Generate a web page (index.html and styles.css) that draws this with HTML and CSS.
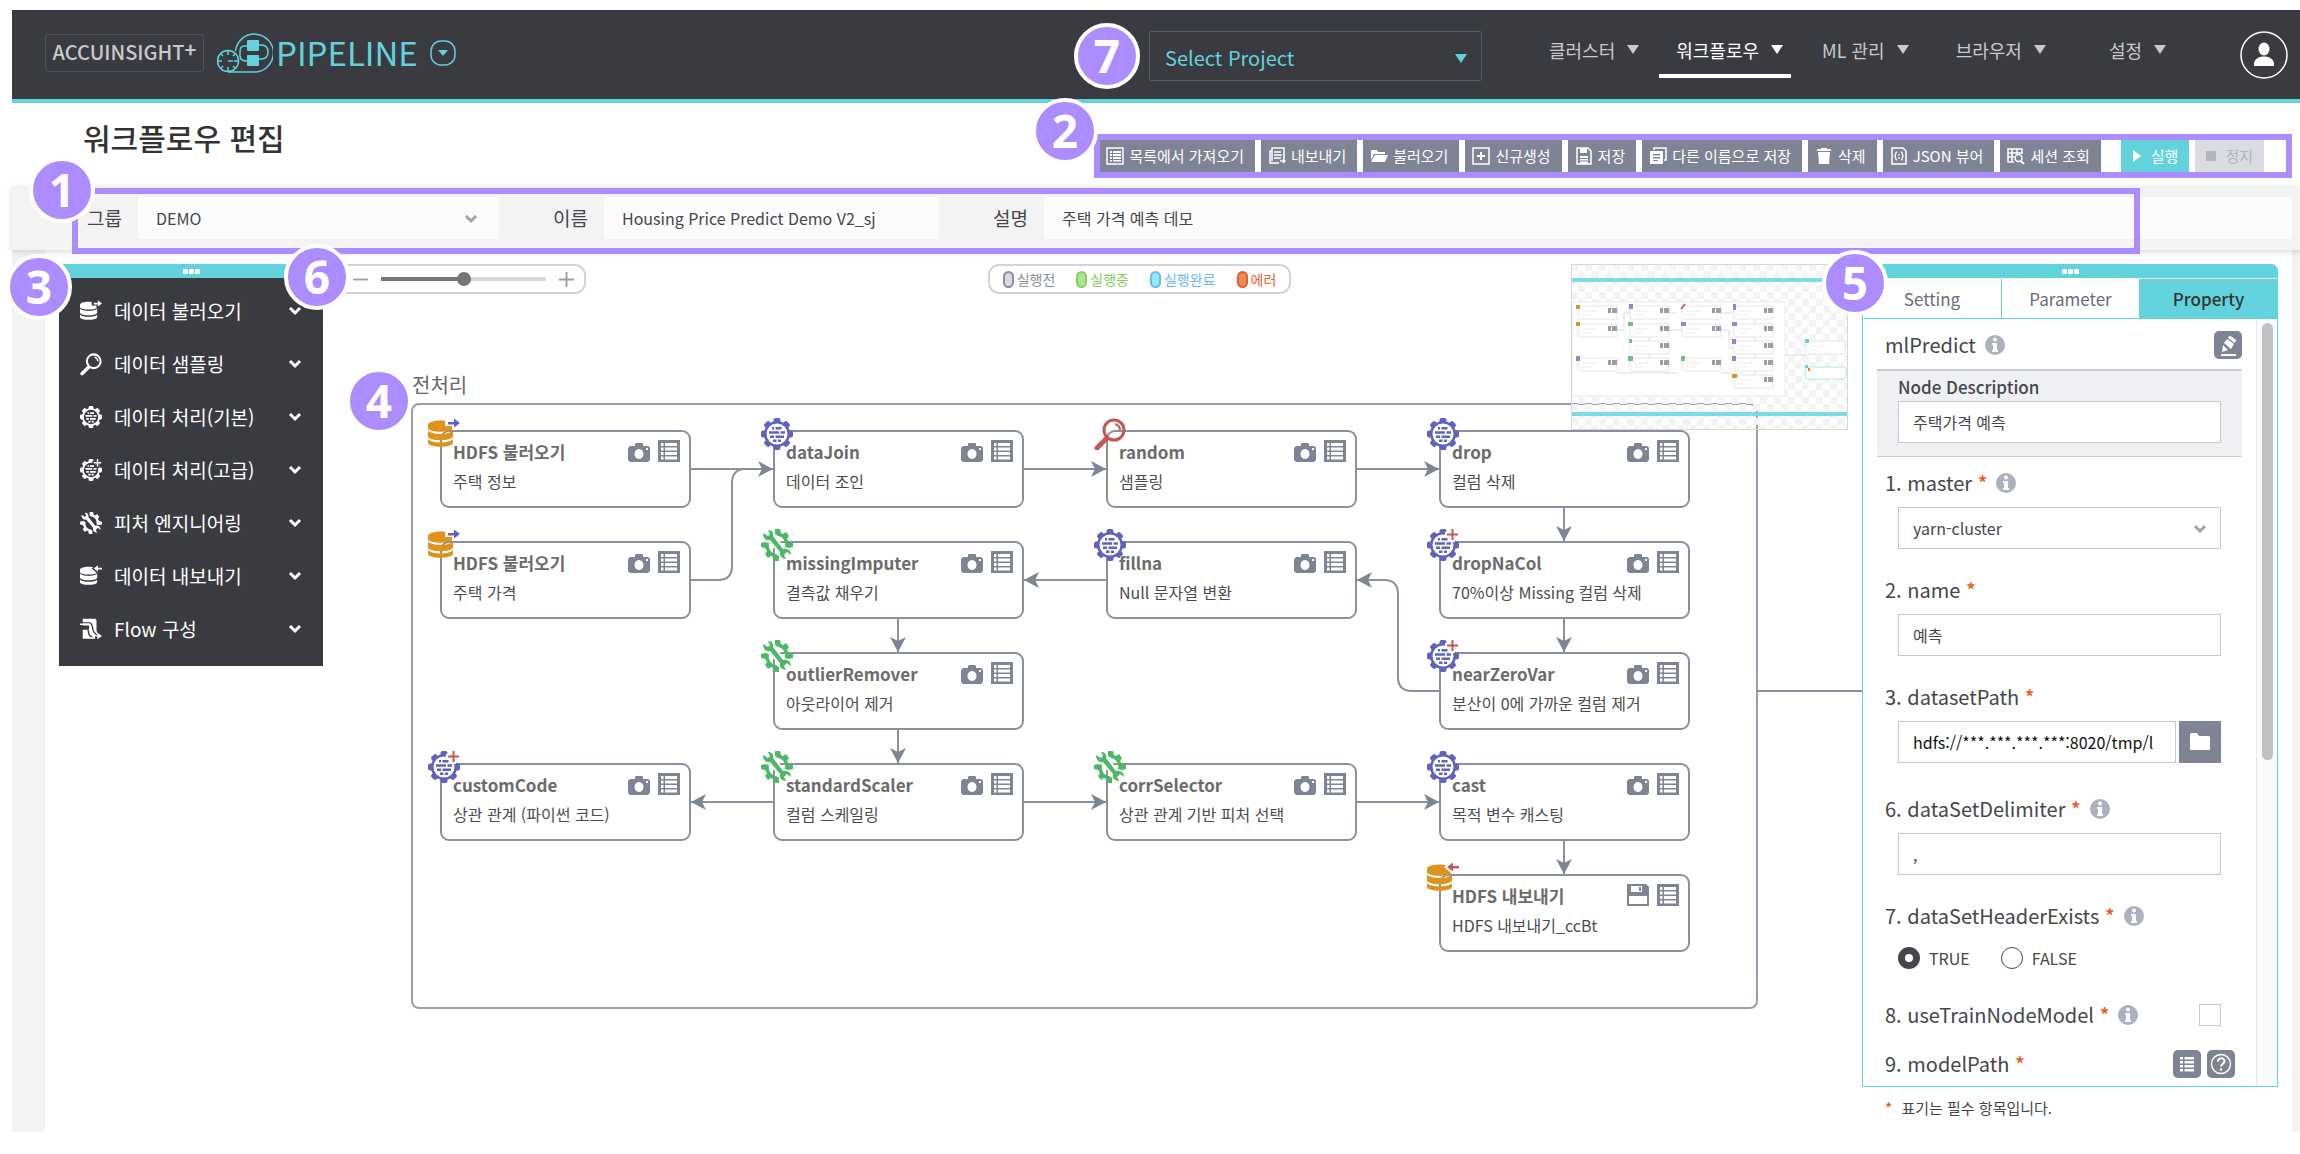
FILE: index.html
```html
<!DOCTYPE html>
<html lang="ko">
<head>
<meta charset="utf-8">
<title>워크플로우 편집</title>
<link rel="stylesheet" href="styles.css">
</head>
<body>
<svg class="sprite" aria-hidden="true">
  <symbol id="db" viewBox="0 0 32 32">
    <path d="M0 7c0-6 25-6 25 0v3c0 5-25 5-25 0z"/>
    <path d="M0 12.500c3 4.500 22 4.500 25 0v6c-2 5-23 5-25 0z"/>
    <path d="M0 21c3 4.500 22 4.500 25 0v4c-1 5-24 5-25 0z"/>
  </symbol>
  <symbol id="arr-out" viewBox="0 0 32 32">
    <path class="halo" d="M17 1h6v-3l9 7-8 7v-4h-7z"/>
    <path d="M20 4h6V0.500l6 4.500-6 4.500V6.500h-6z"/>
  </symbol>
  <symbol id="arr-in" viewBox="0 0 32 32">
    <path class="halo" d="M32 1h-6v-3l-9 7 8 7v-4h7z"/>
    <path d="M32 4h-6V0.500L20 5l6 4.500V6.500h6z"/>
  </symbol>
  <symbol id="gear" viewBox="0 0 32 32">
    <g id="teeth">
      <rect x="12.500" y="0" width="7" height="7" rx="2"/>
      <rect x="12.500" y="25" width="7" height="7" rx="2"/>
      <rect x="0" y="12.500" width="7" height="7" rx="2"/>
      <rect x="25" y="12.500" width="7" height="7" rx="2"/>
      <g transform="rotate(45 16 16)">
        <rect x="12.500" y="0" width="7" height="7" rx="2"/>
        <rect x="12.500" y="25" width="7" height="7" rx="2"/>
        <rect x="0" y="12.500" width="7" height="7" rx="2"/>
        <rect x="25" y="12.500" width="7" height="7" rx="2"/>
      </g>
    </g>
    <circle cx="16" cy="16" r="13"/>
    <circle class="hole" cx="16" cy="16" r="10.500"/>
    <path d="M11 9h2v2.500h-2zM14.500 9h6v2.500h-6zM8 13.200h10v2.500H8zM19.500 13.200h4.500v2.500h-4.500zM9 17.400h4v2.500H9zM14.500 17.400h8.500v2.500h-8.500zM12 21.600h3.500v2.500H12zM17 21.600h3v2.500h-3z"/>
  </symbol>
  <symbol id="plus" viewBox="0 0 32 32">
    <path class="halo" d="M23-2h5v5h5v5h-5v5h-5V8h-5V3h5z"/>
    <path d="M24.500 0h2v4.500H31v2h-4.500V11h-2V6.500H20v-2h4.500z"/>
  </symbol>
  <symbol id="wrench" viewBox="0 0 32 32">
    <path d="M14 0h5l1 4 2 1 3-2 3 4-2 3 2 3 4 1v4l-4 1-4-1c1-6-2-10-7-11l-3-2z"/>
    <path d="M18 32h-5l-1-4-2-1-3 2-3-4 2-3-2-3-4-1v-4l4-1 4 1c-1 6 2 10 7 11l3 2z"/>
    <path class="halo-line" d="M8 7l16 18"/>
    <path d="M2 4l5 3 2-2-2-4c4 0 6 3 5 6l10 13c4-1 8 1 8 6l-4-3-3 3 2 4c-4 0-7-3-6-7L9 11C5 12 2 9 2 4z"/>
  </symbol>
  <symbol id="mag" viewBox="0 0 32 32">
    <circle cx="20" cy="12" r="10" fill="none" stroke="currentColor" stroke-width="3"/>
    <path d="M21 6c3 1 5 3 5 6" fill="none" stroke="currentColor" stroke-width="2"/>
    <path d="M12 21l-9 9" stroke="currentColor" stroke-width="5" stroke-linecap="round"/>
  </symbol>
  <symbol id="flow" viewBox="0 0 32 32">
    <path d="M4 1h18l2 2v15l2 6h-4v6H4V17h6c3 0 4-2 3-6H4z"/>
    <path class="hole-line" d="M3 7h11c7 0 0 17 14 18M3 13h7c4 3 0 15 8 14"/>
    <path d="M0 9h13c4 0 1 17 12 17" fill="none" stroke="currentColor" stroke-width="2"/>
    <path d="M25 21l7 5-7 5z"/>
  </symbol>
  <symbol id="camera" viewBox="0 0 22 20">
    <path fill-rule="evenodd" d="M2 4h5V1.500L8.500 1h5L15 1.500V4h5l2 1.500V18l-2 2H2l-2-2V6zM11 7a4.500 5 0 1 0 0.010 0zM18 6v2h2V6z"/>
  </symbol>
  <symbol id="list" viewBox="0 0 22 22">
    <path d="M0 0h22v22H0z"/>
    <path class="hole" d="M3 3h2.500v3H3zM7 3h12v3H7zM3 7.500h2.500v3H3zM7 7.500h12v3H7zM3 12h2.500v3H3zM7 12h12v3H7zM3 16.500h2.500v3H3zM7 16.500h12v3H7z"/>
  </symbol>
  <symbol id="disk" viewBox="0 0 22 22">
    <path d="M0 0h19l3 3v19H0z"/>
    <path class="hole" d="M4 2h11v6H4zM2 12h18v8H2z"/>
    <path d="M12 3h2v4h-2z"/>
  </symbol>
  <symbol id="chev" viewBox="0 0 14 14"><path d="M2 4l5 5 5-5" fill="none" stroke="currentColor" stroke-width="3"/></symbol>
  <symbol id="tri" viewBox="0 0 12 9"><path d="M0 0h12L6 9z"/></symbol>
  <symbol id="info" viewBox="0 0 20 20"><circle cx="10" cy="10" r="10"/><path fill="#fff" d="M10 2.500a2 2 0 1 1 0 4 2 2 0 0 1 0-4zM7 8h5v7h1v2H7v-2h1V10H7z"/></symbol>
  <symbol id="b-list" viewBox="0 0 18 18"><path d="M1 1h16v16H1z" fill="none" stroke="currentColor" stroke-width="1.500"/><path d="M4 4h2v2H4zM7 4h8v2H7zM4 7h2v2H4zM7 7h8v2H7zM4 10h2v2H4zM7 10h8v2H7zM4 13h2v1.500H4zM7 13h8v1.500H7z"/></symbol>
  <symbol id="b-export" viewBox="0 0 18 18"><path d="M4 14V1h12v11M4 4H2v12h9M6 5h7M6 8h8M6 11h7M12 14h5M15 12l2 2-2 2" fill="none" stroke="currentColor" stroke-width="1.500"/></symbol>
  <symbol id="b-open" viewBox="0 0 18 18"><path d="M1 3h6l1 2h7v2H4l-3 6zM5 8h13l-3 7H1z"/></symbol>
  <symbol id="b-new" viewBox="0 0 18 18"><path d="M1 1h16v16H1z" fill="none" stroke="currentColor" stroke-width="1.500"/><path d="M8 5h2v3h3v2h-3v3H8v-3H5V8h3z"/></symbol>
  <symbol id="b-save" viewBox="0 0 18 18"><path d="M2 1h11l3 3v13H2z" fill="none" stroke="currentColor" stroke-width="1.500"/><path d="M5 1h7v5H5zM5 9h8v2H5zM5 12h8v1.500H5zM5 14.500h8V17H5z"/></symbol>
  <symbol id="b-copy" viewBox="0 0 18 18"><path d="M5 3V1h12v12h-2" fill="none" stroke="currentColor" stroke-width="1.500"/><path fill-rule="evenodd" d="M1 4h13v13H1zM4 7v1.500h7V7zM4 10v1.500h7V10zM4 13v1h5v-1z"/></symbol>
  <symbol id="b-trash" viewBox="0 0 18 18"><path d="M6 1h6v1h4v2H2V2h4zM3 5h12l-1 12H4z"/></symbol>
  <symbol id="b-json" viewBox="0 0 18 18"><path d="M2 1h11l3 3v13H2z" fill="none" stroke="currentColor" stroke-width="1.500"/><path d="M7 5c-2 0-1 3-2 4 1 1 0 4 2 4M11 5c2 0 1 3 2 4-1 1 0 4-2 4M9 7v1.500M9 10v2" fill="none" stroke="currentColor" stroke-width="1.300"/></symbol>
  <symbol id="b-session" viewBox="0 0 18 18"><path d="M7 15H1V2h14v5M1 6h14M5 2v13M10 2v5M1 10h6" fill="none" stroke="currentColor" stroke-width="1.500"/><circle cx="11.500" cy="11" r="3.500" fill="none" stroke="currentColor" stroke-width="1.500"/><path d="M14 14l3 3" stroke="currentColor" stroke-width="2"/></symbol>
  <symbol id="b-play" viewBox="0 0 18 18"><path d="M5 3l8 6-8 6z"/></symbol>
  <symbol id="b-stop" viewBox="0 0 18 18"><path d="M4 4h10v10H4z"/></symbol>
</svg>

<div class="app">
  <header class="top">
    <a class="brand" href="#">ACCUINSIGHT<sup>+</sup></a>
    <a class="product" href="#">
      <svg class="product-icon" viewBox="0 0 56 42" aria-hidden="true">
        <g fill="none" stroke="currentColor" stroke-width="1.500">
          <path d="M18.500 19A19 19 0 1 1 36 40H11"/><circle cx="11" cy="29" r="10.500"/>
          <path d="M30 14h-3q-4 0-4 6v4q0 5 7 5M42 13h2q7 0 7 7t-7 7h-2"/>
          <path d="M11 19v4M11 35v4M1 29h4M17 29h4M4 22l2 2M16 34l2 2M4 36l2-2M16 24l2-2M11 29h5"/>
        </g>
        <rect x="30" y="8" width="12" height="11" rx="1"/><rect x="30" y="23" width="12" height="11" rx="1"/>
      </svg>
      <span>PIPELINE</span>
      <svg class="product-more" viewBox="0 0 26 26" aria-hidden="true"><rect x="1" y="1" width="24" height="24" rx="10" fill="none" stroke="currentColor" stroke-width="1.500"/><path d="M8 10h10l-5 6z"/></svg>
    </a>
    <button class="project" type="button">Select Project <svg class="tri"><use href="#tri"/></svg></button>
    <nav class="menu">
      <a href="#">클러스터 <svg class="tri"><use href="#tri"/></svg></a>
      <a class="on" href="#">워크플로우 <svg class="tri"><use href="#tri"/></svg></a>
      <a class="ml" href="#">ML 관리 <svg class="tri"><use href="#tri"/></svg></a>
      <a href="#">브라우저 <svg class="tri"><use href="#tri"/></svg></a>
      <a class="last" href="#">설정 <svg class="tri"><use href="#tri"/></svg></a>
    </nav>
    <button class="avatar" type="button" aria-label="사용자">
      <svg viewBox="0 0 48 48"><circle cx="24" cy="24" r="23" fill="none" stroke="currentColor" stroke-width="1.500"/><ellipse cx="24" cy="18" rx="5.500" ry="6.500"/><path d="M14 35v-2c0-10 20-10 20 0v2z"/></svg>
    </button>
  </header>

  <div class="title-row">
    <h1>워크플로우 편집</h1>
    <div class="actions">
      <button type="button"><svg><use href="#b-list"/></svg>목록에서 가져오기</button>
      <button type="button"><svg><use href="#b-export"/></svg>내보내기</button>
      <button type="button"><svg><use href="#b-open"/></svg>불러오기</button>
      <button type="button"><svg><use href="#b-new"/></svg>신규생성</button>
      <button type="button"><svg><use href="#b-save"/></svg>저장</button>
      <button type="button"><svg><use href="#b-copy"/></svg>다른 이름으로 저장</button>
      <button type="button"><svg><use href="#b-trash"/></svg>삭제</button>
      <button type="button"><svg><use href="#b-json"/></svg>JSON 뷰어</button>
      <button type="button"><svg><use href="#b-session"/></svg>세션 조회</button>
      <button class="run" type="button"><svg><use href="#b-play"/></svg>실행</button>
      <button class="stop" type="button" disabled><svg><use href="#b-stop"/></svg>정지</button>
    </div>
  </div>

  <form class="meta">
    <label for="group">그룹</label>
    <div class="select group"><select id="group"><option>DEMO</option></select><svg><use href="#chev"/></svg></div>
    <label for="wfname">이름</label>
    <input id="wfname" class="wfname" type="text" value="Housing Price Predict Demo V2_sj">
    <label for="wfdesc">설명</label>
    <input id="wfdesc" class="wfdesc" type="text" value="주택 가격 예측 데모">
  </form>

  <main class="work">
    <aside class="palette">
      <div class="grip"><i></i><i></i><i></i></div>
      <ul>
        <li><button type="button"><svg class="ico"><use href="#db"/><use href="#arr-out"/></svg><span>데이터 불러오기</span><svg class="chev"><use href="#chev"/></svg></button></li>
        <li><button type="button"><svg class="ico"><use href="#mag"/></svg><span>데이터 샘플링</span><svg class="chev"><use href="#chev"/></svg></button></li>
        <li><button type="button"><svg class="ico"><use href="#gear"/></svg><span>데이터 처리(기본)</span><svg class="chev"><use href="#chev"/></svg></button></li>
        <li><button type="button"><svg class="ico"><use href="#gear"/><use href="#plus"/></svg><span>데이터 처리(고급)</span><svg class="chev"><use href="#chev"/></svg></button></li>
        <li><button type="button"><svg class="ico"><use href="#wrench"/></svg><span>피처 엔지니어링</span><svg class="chev"><use href="#chev"/></svg></button></li>
        <li><button type="button"><svg class="ico"><use href="#db"/><use href="#arr-in"/></svg><span>데이터 내보내기</span><svg class="chev"><use href="#chev"/></svg></button></li>
        <li><button type="button"><svg class="ico"><use href="#flow"/></svg><span>Flow 구성</span><svg class="chev"><use href="#chev"/></svg></button></li>
      </ul>
    </aside>

    <section class="canvas">
      <svg class="edges" viewBox="323 264 1539 745" aria-hidden="true">
        <defs><marker id="head" viewBox="0 0 15 16" refX="15" refY="8" markerWidth="15" markerHeight="16" markerUnits="userSpaceOnUse" orient="auto"><path d="M0 0l15 8-15 8 4-8z" fill="#7f8495"/></marker></defs>
        <g fill="none" stroke="#8b90a0" stroke-width="2">
          <path d="M691 469H773" marker-end="url(#head)"/>
          <path d="M691 580h27q14 0 14-14V483q0-14 14-14"/>
          <path d="M1024 469h82" marker-end="url(#head)"/>
          <path d="M1357 469h82" marker-end="url(#head)"/>
          <path d="M1564 508v33" marker-end="url(#head)"/>
          <path d="M1564 619v33" marker-end="url(#head)"/>
          <path d="M1439 691h-27q-14 0-14-14V594q0-14-14-14H1357" marker-end="url(#head)"/>
          <path d="M1106 580h-82" marker-end="url(#head)"/>
          <path d="M898 619v33" marker-end="url(#head)"/>
          <path d="M898 730v33" marker-end="url(#head)"/>
          <path d="M773 802h-82" marker-end="url(#head)"/>
          <path d="M1024 802h82" marker-end="url(#head)"/>
          <path d="M1357 802h82" marker-end="url(#head)"/>
          <path d="M1564 841v33" marker-end="url(#head)"/>
          <path d="M1757 691h105"/>
        </g>
      </svg>
      <h2>전처리</h2>
      <div class="nodes">
        <article class="node c1 r1"><svg class="kind"><use class="orange" href="#db"/><use class="blue" href="#arr-out"/></svg><h3>HDFS 불러오기</h3><svg class="cam"><use href="#camera"/></svg><svg class="lst"><use href="#list"/></svg><p>주택 정보</p></article>
        <article class="node c2 r1"><svg class="kind blue"><use href="#gear"/></svg><h3>dataJoin</h3><svg class="cam"><use href="#camera"/></svg><svg class="lst"><use href="#list"/></svg><p>데이터 조인</p></article>
        <article class="node c3 r1"><svg class="kind red"><use href="#mag"/></svg><h3>random</h3><svg class="cam"><use href="#camera"/></svg><svg class="lst"><use href="#list"/></svg><p>샘플링</p></article>
        <article class="node c4 r1"><svg class="kind blue"><use href="#gear"/></svg><h3>drop</h3><svg class="cam"><use href="#camera"/></svg><svg class="lst"><use href="#list"/></svg><p>컬럼 삭제</p></article>
        <article class="node c1 r2"><svg class="kind"><use class="orange" href="#db"/><use class="blue" href="#arr-out"/></svg><h3>HDFS 불러오기</h3><svg class="cam"><use href="#camera"/></svg><svg class="lst"><use href="#list"/></svg><p>주택 가격</p></article>
        <article class="node c2 r2"><svg class="kind green"><use href="#wrench"/></svg><h3>missingImputer</h3><svg class="cam"><use href="#camera"/></svg><svg class="lst"><use href="#list"/></svg><p>결측값 채우기</p></article>
        <article class="node c3 r2"><svg class="kind blue"><use href="#gear"/></svg><h3>fillna</h3><svg class="cam"><use href="#camera"/></svg><svg class="lst"><use href="#list"/></svg><p>Null 문자열 변환</p></article>
        <article class="node c4 r2"><svg class="kind blue"><use href="#gear"/><use class="red" href="#plus"/></svg><h3>dropNaCol</h3><svg class="cam"><use href="#camera"/></svg><svg class="lst"><use href="#list"/></svg><p>70%이상 Missing 컬럼 삭제</p></article>
        <article class="node c2 r3"><svg class="kind green"><use href="#wrench"/></svg><h3>outlierRemover</h3><svg class="cam"><use href="#camera"/></svg><svg class="lst"><use href="#list"/></svg><p>아웃라이어 제거</p></article>
        <article class="node c4 r3"><svg class="kind blue"><use href="#gear"/><use class="red" href="#plus"/></svg><h3>nearZeroVar</h3><svg class="cam"><use href="#camera"/></svg><svg class="lst"><use href="#list"/></svg><p>분산이 0에 가까운 컬럼 제거</p></article>
        <article class="node c1 r4"><svg class="kind blue"><use href="#gear"/><use class="red" href="#plus"/></svg><h3>customCode</h3><svg class="cam"><use href="#camera"/></svg><svg class="lst"><use href="#list"/></svg><p>상관 관계 (파이썬 코드)</p></article>
        <article class="node c2 r4"><svg class="kind green"><use href="#wrench"/></svg><h3>standardScaler</h3><svg class="cam"><use href="#camera"/></svg><svg class="lst"><use href="#list"/></svg><p>컬럼 스케일링</p></article>
        <article class="node c3 r4"><svg class="kind green"><use href="#wrench"/></svg><h3>corrSelector</h3><svg class="cam"><use href="#camera"/></svg><svg class="lst"><use href="#list"/></svg><p>상관 관계 기반 피처 선택</p></article>
        <article class="node c4 r4"><svg class="kind blue"><use href="#gear"/></svg><h3>cast</h3><svg class="cam"><use href="#camera"/></svg><svg class="lst"><use href="#list"/></svg><p>목적 변수 캐스팅</p></article>
        <article class="node c4 r5"><svg class="kind"><use class="orange" href="#db"/><use class="red" href="#arr-in"/></svg><h3>HDFS 내보내기</h3><svg class="lst"><use href="#disk"/></svg><svg class="lst"><use href="#list"/></svg><p>HDFS 내보내기_ccBt</p></article>
      </div>

      <div class="tools">
        <div class="zoom">
          <button type="button" aria-label="축소"><svg viewBox="0 0 16 16"><path d="M0 7h16v2H0z"/></svg></button>
          <input type="range" min="0" max="100" value="50" aria-label="확대 비율">
          <button type="button" aria-label="확대"><svg viewBox="0 0 16 16"><path d="M0 7h7V0h2v7h7v2H9v7H7V9H0z"/></svg></button>
        </div>
        <ul class="legend">
          <li class="wait"><i></i>실행전</li>
          <li class="busy"><i></i>실행중</li>
          <li class="done"><i></i>실행완료</li>
          <li class="fail"><i></i>에러</li>
        </ul>
        <svg class="minimap" viewBox="0 0 277 166" aria-hidden="true">
          <defs>
            <pattern id="check" width="14" height="14" patternUnits="userSpaceOnUse"><path d="M0 0h7v7H0zM7 7h7v7H7z" fill="#f4f4f5"/></pattern>
            <g id="mini"><rect width="39" height="13" rx="1" fill="#fff" stroke="#e6e6ec"/><path d="M5 5h14M4 9h9" stroke="#ececf0"/></g>
            <g id="mdots"><path d="M30 2h3v5h-3zM34 2h5v5h-5z" fill="#9a9dab"/></g>
          </defs>
          <rect width="277" height="166" fill="url(#check)"/>
          <rect x="1" y="38" width="213" height="94" fill="#fff" stroke="#ececef"/>
          <g fill="none" stroke="#dcdce2">
            <path d="M46 66h7V49h52M98 66h60V84h5M46 109h60M150 49h12M150 109h12M215 91h20M184 55v65M78 72v30"/>
          </g>
          <use href="#mini" x="7" y="42"/><use href="#mini" x="59" y="42"/><use href="#mini" x="111" y="42"/><use href="#mini" x="163" y="42"/>
          <use href="#mini" x="7" y="60"/><use href="#mini" x="59" y="60"/><use href="#mini" x="111" y="60"/><use href="#mini" x="163" y="60"/>
          <use href="#mini" x="59" y="77"/><use href="#mini" x="163" y="77"/><use href="#mini" x="7" y="94"/><use href="#mini" x="59" y="94"/><use href="#mini" x="111" y="94"/><use href="#mini" x="163" y="94"/><use href="#mini" x="163" y="111"/>
          <use href="#mdots" x="7" y="42"/><use href="#mdots" x="59" y="42"/><use href="#mdots" x="111" y="42"/><use href="#mdots" x="163" y="42"/>
          <use href="#mdots" x="7" y="60"/><use href="#mdots" x="59" y="60"/><use href="#mdots" x="111" y="60"/><use href="#mdots" x="163" y="60"/>
          <use href="#mdots" x="59" y="77"/><use href="#mdots" x="163" y="77"/><use href="#mdots" x="7" y="94"/><use href="#mdots" x="59" y="94"/><use href="#mdots" x="111" y="94"/><use href="#mdots" x="163" y="94"/><use href="#mdots" x="163" y="111"/>
          <path d="M5 41h4v4H5zM5 58h4v4H5zM161 110h5v4h-5z" fill="#e0951f"/>
          <path d="M58 40h4v5h-4zM162 40h3v6h-3zM110 58h5v4h-5zM161 58h5v4h-5zM161 75h4v5h-4zM5 92h4v5H5zM161 92h4v5h-4z" fill="#8a8bd0"/>
          <path d="M57 58h5v4h-5zM58 75h3v4h-3zM57 92h5v5h-5zM110 92h4v5h-4z" fill="#6cc483"/>
          <path d="M110 45l4-5" stroke="#c8605e" stroke-width="2"/>
          <use href="#mini" x="235" y="77"/><rect x="235" y="103" width="40" height="12" rx="1" fill="#fff" stroke="#aee9ee"/>
          <path d="M234 75h4v4h-4z" fill="#62d3dc"/><path d="M234 101h3v3h-3z" fill="#62d3dc"/><path d="M237 104h2v3h-2z" fill="#ee7a3c"/>
          <path d="M0 16h277M0 150h277" stroke="#7cdce3" stroke-width="4"/>
          <rect x="0" y="0" width="277" height="166" fill="none" stroke="#d6d6dc" stroke-width="2"/>
        </svg>
      </div>
    </section>

    <aside class="side">
      <div class="panel">
        <div class="grip"><i></i><i></i><i></i></div>
        <div class="tabs">
          <button type="button">Setting</button>
          <button type="button">Parameter</button>
          <button class="on" type="button">Property</button>
        </div>
        <div class="panel-body">
          <form class="props">
            <div class="row head">
              <h3>mlPredict</h3><svg class="info"><use href="#info"/></svg>
              <button class="sq" type="button" aria-label="편집"><svg viewBox="0 0 28 28"><path d="M7 23h15v2H7zM8 21l1-7 5 5zM10 12l3-4 7 5-3 5zM14 7l1.500-2.500 7 4.500-2 3z"/></svg></button>
            </div>
            <div class="desc">
              <label for="nd">Node Description</label>
              <input id="nd" type="text" value="주택가격 예측">
            </div>
            <div class="row"><label for="p1">1. master <b>*</b></label><svg class="info"><use href="#info"/></svg></div>
            <div class="select field"><select id="p1"><option>yarn-cluster</option></select><svg><use href="#chev"/></svg></div>
            <div class="row"><label for="p2">2. name <b>*</b></label></div>
            <div class="field"><input id="p2" type="text" value="예측"></div>
            <div class="row"><label for="p3">3. datasetPath <b>*</b></label></div>
            <div class="field path"><input id="p3" type="text" value="hdfs://***.***.***.***:8020/tmp/l"><button type="button" aria-label="폴더"><svg viewBox="0 0 20 18"><path d="M0 1l1-1h6l2 3h10l1 1v13H0z"/></svg></button></div>
            <div class="row"><label for="p6">6. dataSetDelimiter <b>*</b></label><svg class="info"><use href="#info"/></svg></div>
            <div class="field"><input id="p6" type="text" value=","></div>
            <div class="row tight"><span>7. dataSetHeaderExists <b>*</b></span><svg class="info"><use href="#info"/></svg></div>
            <div class="radios">
              <label><input type="radio" name="hdr" checked>TRUE</label>
              <label><input type="radio" name="hdr">FALSE</label>
            </div>
            <div class="row last"><label for="p8">8. useTrainNodeModel <b>*</b></label><svg class="info"><use href="#info"/></svg><input id="p8" type="checkbox"></div>
            <div class="row last"><span>9. modelPath <b>*</b></span>
              <button class="sq" type="button" aria-label="목록"><svg viewBox="0 0 28 28"><path d="M7 7h3v2.500H7zM11.500 7H21v2.500h-9.500zM7 11h3v2.500H7zM11.500 11H21v2.500h-9.500zM7 15h3v2.500H7zM11.500 15H21v2.500h-9.500zM7 19h3v2.500H7zM11.500 19H21v2.500h-9.500z"/></svg></button>
              <button class="sq" type="button" aria-label="도움말"><svg class="line" viewBox="0 0 28 28"><circle cx="14" cy="14" r="9.500" stroke-width="1.500"/><path d="M11 11.500c0-4.500 7-4 6.500 0-.5 2.500-3.500 2.500-3.500 5M14 18.500v2" stroke-width="2"/></svg></button>
            </div>
          </form>
          <div class="bar"><div class="thumb"></div></div>
        </div>
      </div>
      <p class="foot"><b>*</b> 표기는 필수 항목입니다.</p>
    </aside>
  </main>

  <div class="mark frame f1"></div>
  <div class="mark frame f2"></div>
  <div class="mark badge b1">1</div>
  <div class="mark badge b2">2</div>
  <div class="mark badge b3">3</div>
  <div class="mark badge b4">4</div>
  <div class="mark badge b5">5</div>
  <div class="mark badge b6">6</div>
  <div class="mark badge b7">7</div>
</div>
</body>
</html>
```
FILE: styles.css
```css
:root {
  --dark: #3a3b40;
  --cyan: #62d3dc;
  --steel: #7f8495;
  --violet: #ad8cff;
  --text: #45464c;
  --hole: #fff;
}
* { box-sizing: border-box; }
body {
  margin: 0;
  background: #fff;
  color: var(--text);
  font: 16px/24px "Noto Sans CJK KR", "Noto Sans", sans-serif;
}
h1, h2, h3, p, ul { margin: 0; padding: 0; font-weight: 400; }
ul { list-style: none; }
a { color: inherit; text-decoration: none; }
button, input, select { font: inherit; color: inherit; border: 0; margin: 0; padding: 0; border-radius: 0; background: none; }
svg { display: block; fill: currentColor; flex: none; }
b { color: #ee5a1c; font-weight: 500; }
.sprite { position: absolute; width: 0; height: 0; }
.hole { fill: var(--hole); }
.halo { fill: var(--hole); }
.halo-line { stroke: var(--hole); stroke-width: 8; }
.hole-line { stroke: var(--hole); stroke-width: 2; fill: none; }
.line { fill: none; stroke: currentColor; }
.blue { color: #5f63c0; }
.red { color: #c25754; }
.green { color: #4fb868; }
.orange { color: #e0931c; }
.tri { width: 12px; height: 9px; }

.app { position: relative; margin: 10px 0 0 12px; }

/* top bar */
.top {
  display: flex;
  align-items: center;
  height: 93px;
  padding: 0 12px 4px 33px;
  background: var(--dark);
  border-bottom: 4px solid var(--cyan);
  color: #c9cacc;
}
.brand {
  width: 159px;
  height: 38px;
  border: 1px solid #4e505c;
  border-radius: 3px;
  font-size: 20px;
  line-height: 34px;
  text-align: center;
  font-weight: 500;
  white-space: nowrap;
}
.brand sup { font-size: 20px; line-height: 0; font-weight: 700; vertical-align: 3px; }
.product { display: flex; align-items: center; margin-left: 13px; color: var(--cyan); font-size: 33px; line-height: 40px; }
.product span { padding-bottom: 2px; }
.product-icon { width: 56px; height: 42px; margin-right: 3px; }
.product-more { width: 26px; height: 26px; margin-left: 12px; }
.project {
  display: flex;
  align-items: center;
  justify-content: space-between;
  width: 333px;
  height: 50px;
  margin-left: auto;
  margin-top: 7px;
  padding: 4px 14px 0 15px;
  border: 1px solid #555a68;
  border-radius: 2px;
  color: var(--cyan);
  font-size: 20px;
}
.menu { display: flex; margin: 2px 66px 0 67px; font-size: 18px; line-height: 24px; }
.menu a { display: flex; align-items: center; gap: 12px; margin-right: 24px; padding: 8px 8px 12px 0; border-bottom: 4px solid transparent; }
.menu a + a { padding-left: 17px; margin-right: 16px; }
.menu a.on { color: #fff; border-color: #fff; margin-right: 14px; margin-left: -12px; }
.menu a.ml { margin-right: 22px; }
.menu a.last { margin: 0 0 0 22px; }
.avatar { width: 48px; height: 48px; margin-top: 4px; color: #fff; }

/* title and actions */
.title-row { display: flex; justify-content: space-between; height: 83px; padding: 14px 36px 0 71px; }
h1 { font-size: 30px; line-height: 40px; font-weight: 500; color: #333; }
.actions { display: flex; gap: 6px; margin-top: 23px; }
.actions button {
  display: flex;
  align-items: center;
  gap: 5px;
  height: 32px;
  padding: 0 11px 0 7px;
  background: var(--steel);
  color: #fff;
  font-size: 15px;
  line-height: 32px;
  white-space: nowrap;
}
.actions svg { width: 18px; height: 18px; }
.actions .run { margin-left: 14px; background: var(--cyan); }
.actions .stop { background: #dbdce2; color: #b0b3c0; }

/* workflow meta */
.meta {
  position: relative;
  z-index: 1;
  display: flex;
  align-items: center;
  height: 64px;
  padding: 0 8px 0 75px;
  background: #f3f3f3;
  box-shadow: 0 2px 6px rgba(0, 0, 0, .15);
}
.meta label { width: 51px; font-size: 19px; }
.meta .group, .wfname { margin-right: 54px; }
.group { width: 361px; }
.wfname { width: 335px; }
.wfdesc { flex: 1; }
.meta select, .meta input { height: 42px; padding: 0 18px; background: #fcfcfc; }
.select { position: relative; }
.select select { width: 100%; appearance: none; }
.select svg { position: absolute; right: 21px; top: 50%; width: 14px; height: 14px; margin-top: -6px; color: #a3a3a3; }

/* workspace */
.work {
  display: grid;
  grid-template-columns: 264px 1fr 416px;
  align-items: start;
  margin: 0;
  padding: 14px 22px 10px 47px;
  min-height: 882px;
  background: linear-gradient(#fff, #fff) 33px 0 / calc(100% - 41px) 100% no-repeat #f3f3f3;
}
.grip { display: flex; justify-content: center; align-items: center; gap: 1px; height: 14px; background: var(--cyan); }
.grip i { width: 5px; height: 5px; border-radius: 1px; background: #fff; }
.palette { --hole: var(--dark); background: var(--dark); color: #fff; padding-bottom: 11px; }
.palette ul { padding-top: 6px; }
.palette button { display: flex; align-items: center; width: 100%; height: 53px; padding: 0 21px; font-size: 19px; text-align: left; }
.palette span { flex: 1; margin-left: 12px; }
.palette .ico { width: 22px; height: 24px; }
.palette .chev { width: 14px; height: 14px; }

.canvas { position: relative; padding: 107px 0 0 88px; }
.edges { position: absolute; left: 0; top: 0; width: 1539px; height: 745px; }
h2 { font-size: 20px; line-height: 28px; color: #666; margin: 0 0 4px 1px; }
.nodes {
  display: grid;
  grid-template-columns: repeat(4, 251px);
  grid-template-rows: repeat(5, 78px);
  gap: 33px 82px;
  width: 1347px;
  padding: 25px 0 55px 27px;
  border: 2px solid #9a9eac;
  border-radius: 8px;
}
.node {
  position: relative;
  display: grid;
  grid-template-columns: 1fr 22px 22px;
  align-content: start;
  gap: 5px 8px;
  padding: 8px 9px 0 11px;
  border: 2px solid #8b90a0;
  border-radius: 9px;
  background: #fff;
}
.c1 { grid-column: 1; } .c2 { grid-column: 2; } .c3 { grid-column: 3; } .c4 { grid-column: 4; }
.r1 { grid-row: 1; } .r2 { grid-row: 2; } .r3 { grid-row: 3; } .r4 { grid-row: 4; } .r5 { grid-row: 5; }
.node h3 { font-size: 17px; line-height: 24px; font-weight: 700; color: #6b6b6b; white-space: nowrap; }
.node p { grid-column: 1 / -1; color: #4c4c50; }
.kind { position: absolute; left: -14px; top: -14px; width: 32px; height: 32px; overflow: visible; }
.cam, .lst { color: var(--steel); width: 22px; }
.cam { height: 20px; margin-top: 2px; }
.lst { height: 22px; }

.tools { position: absolute; left: 13px; right: 14px; top: 0; display: flex; align-items: flex-start; justify-content: space-between; }
.zoom, .legend { display: flex; align-items: center; height: 30px; border: 2px solid #d4d4d4; border-radius: 11px; background: #fff; }
.zoom { width: 250px; padding: 0 10px 0 15px; gap: 13px; color: #9a9eb0; }
.zoom svg { width: 15px; height: 15px; }
.zoom input { flex: 1; min-width: 0; height: 18px; appearance: none; background: linear-gradient(90deg, #757575 50%, #d8d8d8 50%) center / 100% 4px no-repeat; }
.zoom input::-webkit-slider-thumb { appearance: none; width: 14px; height: 14px; border-radius: 50%; background: #757575; }
.legend { gap: 21px; padding: 0 13px; margin-left: 122px; font-size: 14px; line-height: 20px; }
.legend li { display: flex; align-items: center; gap: 3px; }
.legend i { width: 11px; height: 17px; border: 2px solid; border-radius: 6px; }
.wait { color: #8a8e9e; } .wait i { background: #d9dae0; }
.busy { color: #86cf62; } .busy i { background: #a9e58e; }
.done { color: #6bb9f3; } .done i { background: #8fecfa; }
.fail { color: #e9612b; } .fail i { background: #f08a5c; }
.minimap { width: 277px; height: 166px; }

/* property panel */
.panel { border: 1px solid var(--cyan); border-radius: 6px 6px 0 0; background: #fff; overflow: hidden; }
.panel .grip { height: 13px; }
.tabs { display: grid; grid-template-columns: 1fr 1fr 1fr; height: 40px; margin-top: 1px; border-bottom: 1px solid var(--cyan); font-size: 17px; color: #6a6d7a; }
.tabs button + button { border-left: 1px solid var(--cyan); }
.tabs .on { background: var(--cyan); color: #333; font-weight: 500; }
.panel-body { display: flex; }
.props { flex: 1; min-width: 0; padding: 10px 14px 6px 14px; }
.row { display: flex; align-items: center; height: 32px; padding-left: 8px; font-size: 20px; margin-bottom: 8px; }
.row .info { margin-left: 9px; }
.info { width: 20px; height: 20px; color: #adb0bf; }
.row h3 { font-size: 20px; }
.sq { width: 28px; height: 28px; border-radius: 5px; background: var(--steel); color: #fff; margin-left: 6px; }
.row :nth-last-child(2).sq, .head .sq, .row [type=checkbox] { margin-left: auto; }
.desc { margin-bottom: 10px; padding: 4px 21px 13px; background: #eff0f4; border: solid #ccc; border-width: 2px 0 1px; }
.desc label { display: block; margin-bottom: 2px; font-size: 17px; font-weight: 500; }
.desc input, .field input, .field select { width: 100%; height: 42px; padding: 0 14px; border: 1px solid #c8c8c8; background: #fff; }
.field { margin: 0 21px 25px; }
.field.select svg { right: 14px; }
.path { display: flex; gap: 3px; margin-bottom: 30px; color: #111; }
.path button { flex: none; width: 42px; height: 42px; background: var(--steel); color: #fff; }
.path button svg { width: 20px; height: 18px; margin: auto; }
.path input { flex: 1; min-width: 0; }
.row.tight { margin-bottom: 4px; }
.radios { display: flex; gap: 31px; height: 44px; margin: 0 21px 19px; align-items: center; }
.radios label { display: flex; align-items: center; gap: 9px; }
[type=radio] { appearance: none; width: 22px; height: 22px; border: 1px solid var(--text); border-radius: 50%; background: #fff; }
[type=radio]:checked { border-width: 7px; }
[type=checkbox] { appearance: none; width: 22px; height: 22px; border: 1px solid #c8c8c8; background: #fff; margin-right: 21px; }
.row.last { margin-bottom: 17px; }
.row.last:last-child { margin: 0; padding-right: 7px; }
.bar { width: 21px; padding: 4px 4px 0 5px; border-left: 1px solid #e6e6e6; background: #fafafa; }
.thumb { height: 437px; border-radius: 6px; background: #c1c1c1; }
.foot { margin: 9px 0 0 23px; font-size: 15px; }
.foot b { margin-right: 5px; }

/* numbered guide marks */
.mark { position: absolute; z-index: 2; }
.frame { border: 6px solid var(--violet); }
.f1 { left: 60px; right: 160px; top: 178px; height: 66px; }
.f2 { left: 1082px; right: 8px; top: 124px; height: 44px; }
.badge {
  width: 66px;
  height: 66px;
  border: 4px solid #fff;
  border-radius: 50%;
  background: var(--violet);
  color: #fff;
  font: 700 46px/56px "Open Sans", "Noto Sans", sans-serif;
  text-align: center;
}
.b1 { left: 17px; top: 147px; }
.b2 { left: 1020px; top: 88px; }
.b3 { left: -6px; top: 244px; }
.b4 { left: 334px; top: 358px; }
.b5 { right: 412px; top: 240px; }
.b6 { left: 272px; top: 234px; }
.b7 { left: 1062px; top: 13px; }
```
